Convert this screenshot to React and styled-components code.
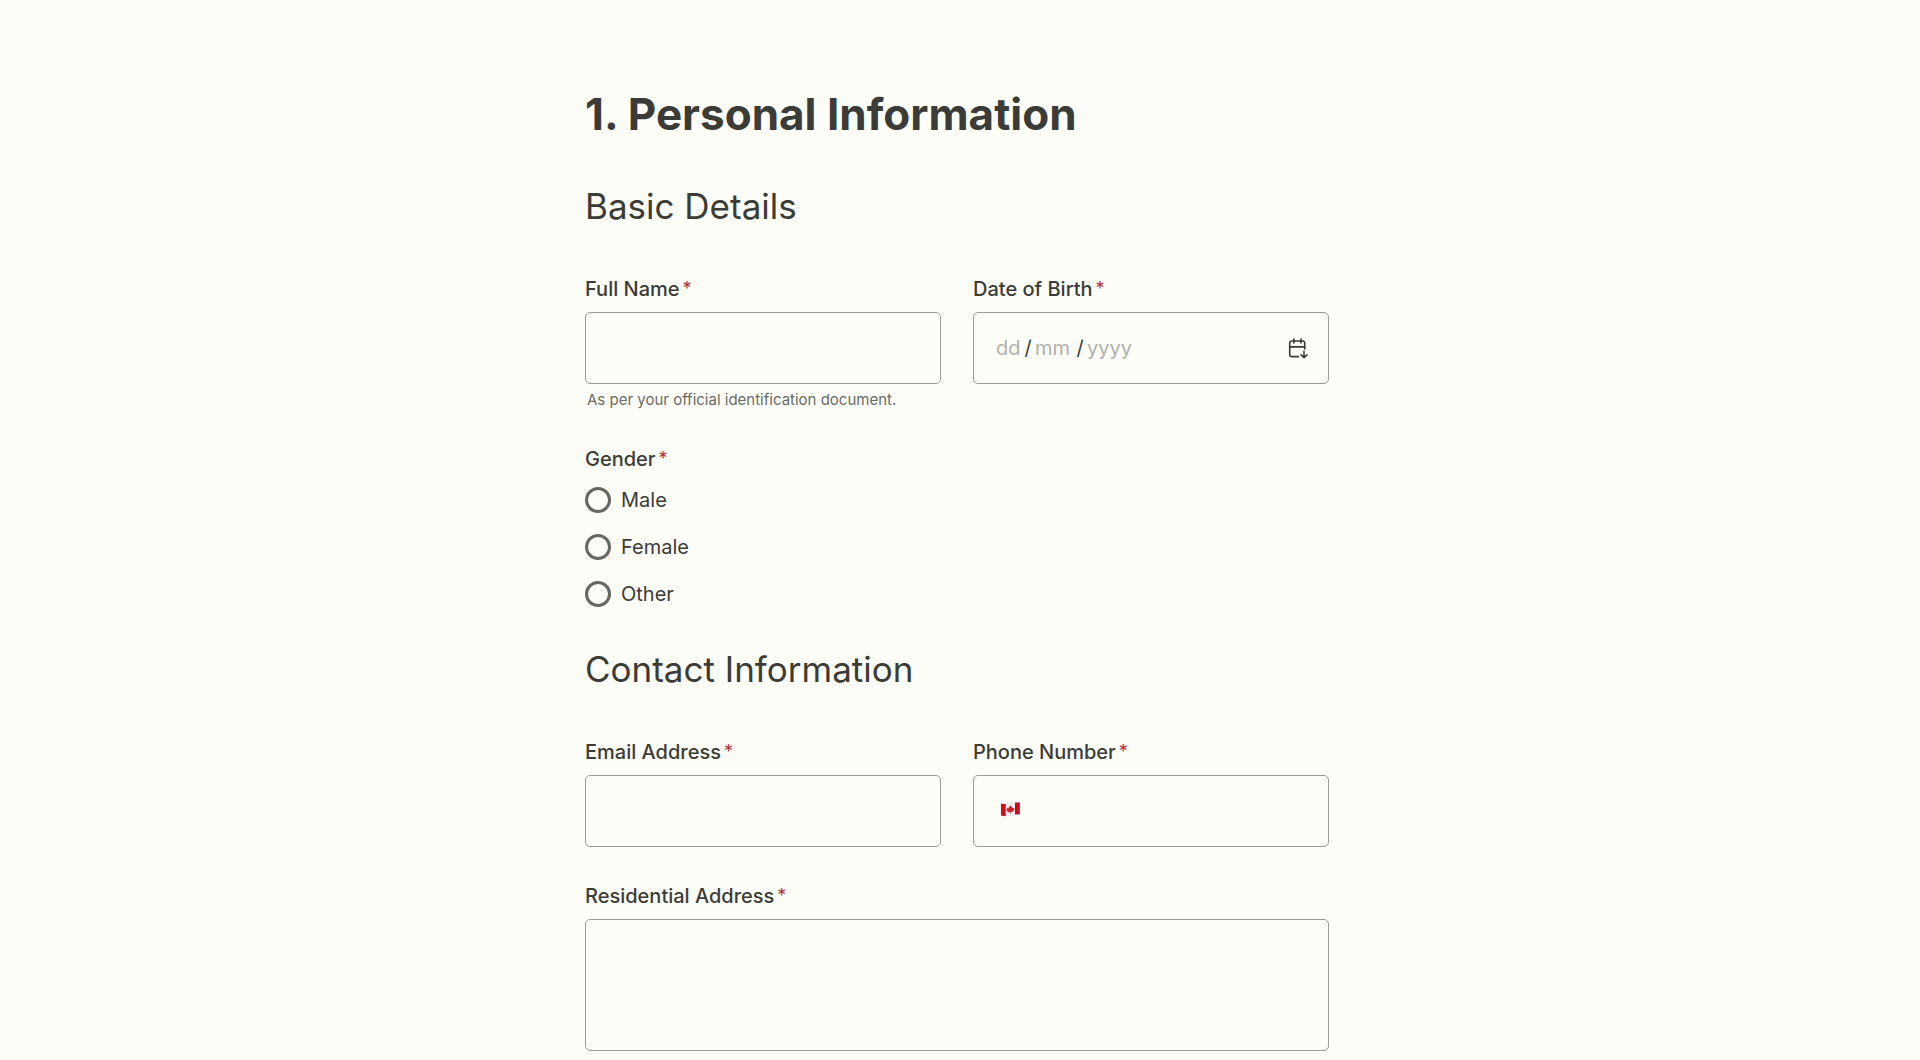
import React from 'react';
import styled, { createGlobalStyle } from 'styled-components';

const GlobalStyle = createGlobalStyle`
  *,
  *::before,
  *::after {
    box-sizing: border-box;
  }

  body {
    margin: 0;
    background-color: #fcfdf7;
    color: #3b3b37;
    font-family: Inter, Roboto, sans-serif;
    font-size: 20px;
    line-height: 24px;
  }

  input,
  textarea,
  button {
    font: inherit;
    color: inherit;
  }
`;

const Page = styled.main`
  display: flex;
  justify-content: center;
  padding: 84px 30px 8px 24px;
`;

const Form = styled.form`
  flex: 1;
  min-width: 0;
  max-width: 744px;
`;

const Title = styled.h1`
  margin: 0;
  font-size: 44px;
  font-weight: 700;
  line-height: 60px;
`;

const SectionTitle = styled.h2`
  margin: 40px 0 0;
  font-size: 35px;
  font-weight: 400;
  line-height: 44px;
`;

const Fields = styled.div`
  display: grid;
  grid-template-columns: repeat(2, minmax(0, 1fr));
  gap: 37px 32px;
  margin-top: 49px;
`;

const Field = styled.div`
  display: flex;
  flex-direction: column;
  grid-column: ${props => (props.$wide ? '1 / -1' : 'auto')};
`;

const FieldSet = styled.fieldset`
  grid-column: 1 / -1;
  margin: 0;
  padding: 0;
  border: 0;
`;

const labelText = `
  display: flex;
  gap: 3px;
  padding: 0;
  font-size: 20px;
  font-weight: 500;
  line-height: 24px;
`;

const Label = styled.label`
  ${labelText}
`;

const Legend = styled.legend`
  ${labelText}
`;

const GroupLabel = styled.span`
  ${labelText}
`;

const Asterisk = styled.span`
  color: #b3313a;
  font-size: 18px;
  font-weight: 400;
  line-height: 24px;
`;

const boxStyle = `
  width: 100%;
  margin-top: 11px;
  border: 1px solid #9c9d98;
  border-radius: 5px;
  background-color: transparent;
`;

const TextInput = styled.input`
  ${boxStyle}
  height: 72px;
  padding: 0 22px;
`;

const TextArea = styled.textarea`
  ${boxStyle}
  display: block;
  height: 132px;
  padding: 22px;
  resize: none;
`;

const InputGroup = styled.div`
  ${boxStyle}
  display: flex;
  align-items: center;
  height: 72px;
  padding: 0 18px 0 22px;
`;

const DatePart = styled.input`
  width: ${props => props.$width}px;
  padding: 0;
  border: 0;
  outline: 0;
  background: none;

  &::placeholder {
    color: #b0b1ab;
    opacity: 1;
  }
`;

const Slash = styled.span`
  width: 14px;
  text-align: center;
`;

const IconButton = styled.button`
  display: flex;
  padding: 0;
  border: 0;
  background: none;
  cursor: pointer;
`;

const CalendarButton = styled(IconButton)`
  margin-left: auto;
`;

const PhoneInput = styled.input`
  flex: 1;
  min-width: 0;
  padding: 0 12px;
  border: 0;
  outline: 0;
  background: none;
`;

const Hint = styled.p`
  margin: 6px 0 0 2px;
  color: #6a6b66;
  font-size: 15px;
  line-height: 20px;
`;

const Options = styled.div`
  display: flex;
  flex-direction: column;
  gap: 21px;
  margin-top: 16px;
`;

const Option = styled.label`
  display: flex;
  align-items: center;
  gap: 10px;
`;

const Radio = styled.input`
  appearance: none;
  width: 26px;
  height: 26px;
  margin: 0;
  border: 3px solid #666762;
  border-radius: 50%;

  &:checked {
    background: radial-gradient(#666762 0 6px, transparent 7px);
  }
`;

const CalendarIcon = () => (
  <svg
    width="24"
    height="24"
    viewBox="0 0 24 24"
    fill="none"
    stroke="currentColor"
    strokeWidth="1.6"
    strokeLinecap="round"
    strokeLinejoin="round"
    aria-hidden="true"
  >
    <path d="M12.5 20.6H5.7a2 2 0 0 1-2-2V7a2 2 0 0 1 2-2h11a2 2 0 0 1 2 2v6" />
    <path d="M3.7 10.9h15M7.9 3v4M15 3v4" />
    <path d="M18 15.4v6M15 18.9l3 2.8 3-2.8" />
  </svg>
);

const CanadaFlag = () => (
  <svg width="28" height="20" viewBox="0 2 28 20" aria-hidden="true">
    <path
      d="M5 4.5c3 1 6 .6 9.300 0s6-1.300 9.500-1v12c-3-.5-6 .3-9.500.8s-6.300.7-9.300-.1z"
      fill="#f3f1f1"
      stroke="#c9c5c5"
      strokeWidth=".4"
    />
    <path d="M5 4.5q2.300.6 4.700.5v12.200q-2.400 0-4.700-.7z" fill="#d20f1b" />
    <path d="M19 3.700q2.400-.4 4.800-.2v12q-2.400-.3-4.800.1z" fill="#c20f19" />
    <path
      d="M14.400 6.200l.9 1.500.8-.4-.1 2 1.100-.9.3.8 1.100-.1-.5 1.200.5.4-2.200 1.800.1.700-1.700-.1v1.500h-.6v-1.400l-1.700.3.1-.7-2.200-1.400.5-.6-.5-1.100 1.100-.1.300-.8 1.200.7-.2-1.900.9.300z"
      fill="#d6202b"
    />
  </svg>
);

const Required = () => <Asterisk aria-hidden="true">*</Asterisk>;

const genders = ['Male', 'Female', 'Other'];

const App = () => (
  <Page>
    <GlobalStyle />
    <Form>
      <Title>1. Personal Information</Title>

      <SectionTitle>Basic Details</SectionTitle>
      <Fields>
        <Field>
          <Label htmlFor="full-name">
            Full Name
            <Required />
          </Label>
          <TextInput id="full-name" type="text" aria-describedby="full-name-hint" required />
          <Hint id="full-name-hint">As per your official identification document.</Hint>
        </Field>
        <Field role="group" aria-labelledby="birth-label">
          <GroupLabel id="birth-label">
            Date of Birth
            <Required />
          </GroupLabel>
          <InputGroup>
            <DatePart $width={25} placeholder="dd" aria-label="Day" maxLength={2} />
            <Slash>/</Slash>
            <DatePart $width={38} placeholder="mm" aria-label="Month" maxLength={2} />
            <Slash>/</Slash>
            <DatePart $width={60} placeholder="yyyy" aria-label="Year" maxLength={4} />
            <CalendarButton type="button" aria-label="Open calendar">
              <CalendarIcon />
            </CalendarButton>
          </InputGroup>
        </Field>
        <FieldSet>
          <Legend>
            Gender
            <Required />
          </Legend>
          <Options>
            {genders.map(gender => (
              <Option key={gender}>
                <Radio type="radio" name="gender" value={gender} />
                {gender}
              </Option>
            ))}
          </Options>
        </FieldSet>
      </Fields>

      <SectionTitle>Contact Information</SectionTitle>
      <Fields>
        <Field>
          <Label htmlFor="email">
            Email Address
            <Required />
          </Label>
          <TextInput id="email" type="email" required />
        </Field>
        <Field>
          <Label htmlFor="phone">
            Phone Number
            <Required />
          </Label>
          <InputGroup>
            <IconButton type="button" aria-label="Country: Canada">
              <CanadaFlag />
            </IconButton>
            <PhoneInput id="phone" type="tel" required />
          </InputGroup>
        </Field>
        <Field $wide>
          <Label htmlFor="address">
            Residential Address
            <Required />
          </Label>
          <TextArea id="address" required />
        </Field>
      </Fields>
    </Form>
  </Page>
);

export default App;
